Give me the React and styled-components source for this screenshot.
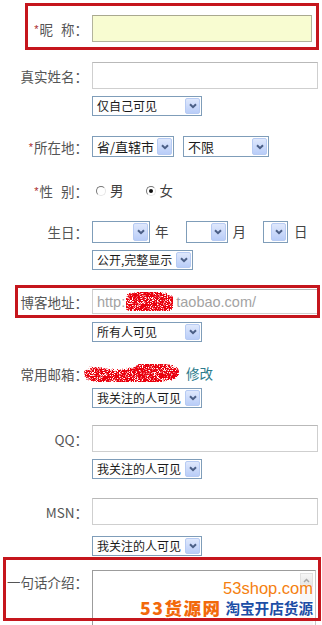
import React from "react";
import styled, { createGlobalStyle } from "styled-components";

const Global = createGlobalStyle`
  html, body { margin: 0; padding: 0; background: #fff; overflow: hidden; }
  body { width: 322px; height: 625px; }
`;

const Page = styled.div`
  position: relative;
  width: 322px;
  height: 625px;
  overflow: hidden;
  font-family: "Noto Sans CJK SC", "Noto Sans", sans-serif;
  font-size: 13.5px;
  color: #555;
`;

const Form = styled.div`
  display: flex;
  flex-direction: column;
`;

const Field = styled.div`
  position: relative;
  display: grid;
  grid-template-columns: 88px 1fr;
  column-gap: 4px;
  align-items: ${(p) => p.$align || "center"};
  height: ${(p) => p.$h}px;
  margin-top: ${(p) => p.$mt}px;
`;

const Label = styled.div`
  text-align: right;
  white-space: nowrap;
  line-height: 16px;
  padding-top: ${(p) => p.$pt || 0}px;
`;

const Req = styled.span`
  font-family: "Liberation Sans", Arial, sans-serif;
  font-size: 11px;
  color: #a8282c;
  vertical-align: 2px;
  margin-right: 1px;
`;

const Gap = styled.span`
  display: inline-block;
  width: ${(p) => p.$w}px;
`;

const Content = styled.div`
  display: flex;
  align-items: center;
  height: 100%;
`;

const TextBox = styled.div`
  box-sizing: border-box;
  width: ${(p) => p.$w}px;
  height: 100%;
  border: 1px solid ${(p) => p.$border || "#cfcfcf"};
  border-top-color: ${(p) => p.$borderTop || "#b9b9b9"};
  background: ${(p) => p.$bg || "#fff"};
  display: flex;
  align-items: center;
  padding-left: 4px;
  font-family: "Liberation Sans", Arial, sans-serif;
  font-size: 14.5px;
  color: #a3a3a3;
  white-space: nowrap;
  overflow: hidden;
`;

const SelectBox = styled.div`
  box-sizing: border-box;
  width: ${(p) => p.$w}px;
  height: ${(p) => p.$h || 20}px;
  flex: none;
  border: 1px solid #7f9db9;
  background: #fff;
  display: flex;
  align-items: center;
  justify-content: space-between;
  padding: 1px 1px 1px 4px;
  font-size: ${(p) => p.$fs || 12}px;
  color: #1a1a1a;
  line-height: 1;
  white-space: nowrap;
`;

const ArrowBtn = styled.span`
  flex: none;
  box-sizing: border-box;
  width: 15px;
  height: 100%;
  border: 1px solid #b7cbf3;
  border-radius: 2px;
  background: linear-gradient(#dfe8fc, #b9cdf8);
  display: flex;
  align-items: center;
  justify-content: center;
`;

const Select = ({ w, h, fs, children }) => (
  <SelectBox $w={w} $h={h} $fs={fs}>
    <span>{children}</span>
    <ArrowBtn>
      <svg width="8" height="6" viewBox="0 0 8 6">
        <path d="M1 1.2 L4 4.2 L7 1.2" fill="none" stroke="#4b5f86" strokeWidth="2" />
      </svg>
    </ArrowBtn>
  </SelectBox>
);

const SubRow = styled.div`
  display: flex;
  margin-top: ${(p) => p.$mt}px;
  padding-left: 92px;
`;

const Pair = styled.div`
  display: flex;
  gap: ${(p) => p.$gap}px;
`;

const Unit = styled.span`
  color: #444;
  margin: 0 ${(p) => p.$mr}px 0 ${(p) => p.$ml}px;
  line-height: 1;
`;

const Options = styled.div`
  display: flex;
  align-items: center;
  padding-left: 4px;
  gap: 22px;
`;

const Option = styled.span`
  display: inline-flex;
  align-items: center;
  gap: 4px;
  color: #3d3d3d;
  line-height: 1;
`;

const Radio = styled.span`
  position: relative;
  width: 10px;
  height: 10px;
  box-sizing: border-box;
  border-radius: 50%;
  border: 1px solid;
  border-color: #777 #e6e6e6 #e6e6e6 #777;
  &::after {
    content: "";
    display: ${(p) => (p.$on ? "block" : "none")};
    position: absolute;
    left: 2px;
    top: 2px;
    width: 4px;
    height: 4px;
    border-radius: 50%;
    background: #111;
  }
`;

const Link = styled.span`
  color: #2b7b8d;
  margin-left: 6px;
  line-height: 1;
`;

const Mark = styled.div`
  position: absolute;
  pointer-events: none;
  box-sizing: border-box;
  border: 3px solid #c5161d;
  top: ${(p) => p.$t}px;
  left: ${(p) => p.$l}px;
  right: ${(p) => p.$r}px;
  height: ${(p) => p.$h}px;
`;

const TextArea = styled.div`
  box-sizing: border-box;
  width: 224px;
  height: 62px;
  border: 1px solid #9c9c9c;
  border-right-color: #c8c8c8;
  background: #fff;
  display: flex;
  justify-content: flex-end;
  padding: 2px;
`;

const ScrollBar = styled.div`
  width: 13px;
  display: flex;
  flex-direction: column;
  background: #f7f7f7;
`;

const ScrollBtn = styled.div`
  box-sizing: border-box;
  height: 14px;
  border: 1px solid #e1e1e1;
  background: linear-gradient(#f6f6f6, #e4e4e4);
  display: flex;
  align-items: center;
  justify-content: center;
`;

const Watermark = styled.div`
  position: absolute;
  right: 9px;
  bottom: 9px;
  display: flex;
  flex-direction: column;
  align-items: flex-end;
  line-height: 1;
  pointer-events: none;
`;

const WmDomain = styled.div`
  font-family: "Liberation Sans", Arial, sans-serif;
  font-size: 16.5px;
  color: #f5800f;
  margin-bottom: 2px;
  text-shadow: 0 0 2px #fff;
`;

const WmLine = styled.div`
  display: flex;
  align-items: flex-end;
  gap: 4px;
`;

const WmBrand = styled.span`
  font-family: "Noto Sans CJK SC", sans-serif;
  font-weight: 900;
  font-size: 17.5px;
  letter-spacing: 1.5px;
  color: #f2690b;
  text-shadow: -1px -1px 0 #fff, 1px -1px 0 #fff, -1px 1px 0 #fff, 1px 1px 0 #fff;
`;

const WmSlogan = styled.span`
  font-family: "Noto Sans CJK SC", sans-serif;
  font-weight: 700;
  font-size: 14.6px;
  color: #1c4ea6;
  text-shadow: -1px -1px 0 #fff, 1px -1px 0 #fff, -1px 1px 0 #fff, 1px 1px 0 #fff;
`;

const ScribbleSvg = styled.svg`
  flex: none;
  display: block;
  margin-left: ${(p) => p.$ml || 0}px;
`;

const Scribble = ({ id, w, h, d, ml, sw }) => (
  <ScribbleSvg $ml={ml} width={w} height={h} viewBox={`0 0 ${w} ${h}`}>
    <defs>
      <filter id={id} x="-10%" y="-20%" width="120%" height="140%">
        <feTurbulence type="fractalNoise" baseFrequency="0.7" numOctaves="2" seed="3" result="n" />
        <feDisplacementMap in="SourceGraphic" in2="n" scale="6" xChannelSelector="R" yChannelSelector="G" result="d" />
        <feTurbulence type="fractalNoise" baseFrequency="1.6" numOctaves="1" seed="9" result="n2" />
        <feColorMatrix in="n2" type="matrix" values="0 0 0 0 0  0 0 0 0 0  0 0 0 0 0  7 0 0 0 -2.4" result="m" />
        <feComposite in="d" in2="m" operator="in" />
      </filter>
    </defs>
    <g filter={`url(#${id})`} fill="none" stroke="#ea0010" strokeLinecap="round" strokeLinejoin="round">
      {d.map((path, i) => (
        <path key={i} d={path} strokeWidth={sw[i]} />
      ))}
    </g>
  </ScribbleSvg>
);

export default function App() {
  return (
    <Page>
      <Global />
      <Form>
        <Field $mt={15} $h={27}>
          <Mark $t={-12} $l={25} $r={3} $h={47} />
          <Label>
            <Req>*</Req>昵<Gap $w={8} />称：
          </Label>
          <TextBox $w={220} $bg="#f8fcd1" $border="#b3b39c" $borderTop="#a9a98f" />
        </Field>

        <Field $mt={20} $h={27}>
          <Label>真实姓名：</Label>
          <TextBox $w={226} />
        </Field>
        <SubRow $mt={7}>
          <Select w={110}>仅自己可见</Select>
        </SubRow>

        <Field $mt={20} $h={21}>
          <Label>
            <Req>*</Req>所在地：
          </Label>
          <Content>
            <Pair $gap={9}>
              <Select w={82} h={21} fs={13}>省/直辖市</Select>
              <Select w={86} h={21} fs={13}>不限</Select>
            </Pair>
          </Content>
        </Field>

        <Field $mt={24} $h={20}>
          <Label>
            <Req>*</Req>性<Gap $w={8} />别：
          </Label>
          <Options>
            <Option>
              <Radio />男
            </Option>
            <Option>
              <Radio $on />女
            </Option>
          </Options>
        </Field>

        <Field $mt={20} $h={22}>
          <Label>生日：</Label>
          <Content>
            <Select w={58} h={22} />
            <Unit $ml={5} $mr={17}>年</Unit>
            <Select w={42} h={22} />
            <Unit $ml={5} $mr={17}>月</Unit>
            <Select w={25} h={22} />
            <Unit $ml={6} $mr={0}>日</Unit>
          </Content>
        </Field>
        <SubRow $mt={7}>
          <Select w={101}>公开,完整显示</Select>
        </SubRow>

        <Field $mt={19} $h={25}>
          <Mark $t={-4} $l={15} $r={2} $h={33} />
          <Label>博客地址：</Label>
          <TextBox $w={226}>
            http:
            <Scribble
              id="s1"
              w={54}
              h={24}
              ml={-3}
              sw={[14, 12, 8]}
              d={[
                "M9 12 C 16 6, 28 6, 36 9 S 46 13, 47 12",
                "M8 15 C 18 19, 34 19, 46 15",
                "M20 6 C 28 4, 38 5, 44 8",
              ]}
            />
            taobao.com/
          </TextBox>
        </Field>
        <SubRow $mt={8}>
          <Select w={110}>所有人可见</Select>
        </SubRow>

        <Field $mt={20} $h={20}>
          <Label>常用邮箱：</Label>
          <Content>
            <Scribble
              id="s2"
              w={96}
              h={24}
              ml={-8}
              sw={[11, 12, 10, 8]}
              d={[
                "M6 12 C 16 8, 26 16, 40 13 S 58 8, 72 10",
                "M36 15 C 52 19, 70 16, 89 11",
                "M56 7 C 66 3, 78 5, 87 9",
                "M8 15 C 18 17, 28 16, 36 14",
              ]}
            />
            <Link>修改</Link>
          </Content>
        </Field>
        <SubRow $mt={6}>
          <Select w={110}>我关注的人可见</Select>
        </SubRow>

        <Field $mt={17} $h={27}>
          <Label>QQ：</Label>
          <TextBox $w={226} />
        </Field>
        <SubRow $mt={7}>
          <Select w={110}>我关注的人可见</Select>
        </SubRow>

        <Field $mt={19} $h={27}>
          <Label>MSN：</Label>
          <TextBox $w={226} />
        </Field>
        <SubRow $mt={11}>
          <Select w={110}>我关注的人可见</Select>
        </SubRow>

        <Field $mt={14} $h={62} $align="start">
          <Mark $t={-13} $l={3} $r={1} $h={64} />
          <Label $pt={4}>一句话介绍：</Label>
          <TextArea>
            <ScrollBar>
              <ScrollBtn>
                <svg width="7" height="5" viewBox="0 0 7 5">
                  <path d="M1 4 L3.5 1.5 L6 4" fill="none" stroke="#a8a8a8" strokeWidth="1.5" />
                </svg>
              </ScrollBtn>
            </ScrollBar>
          </TextArea>
        </Field>
      </Form>

      <Watermark>
        <WmDomain>53shop.com</WmDomain>
        <WmLine>
          <WmBrand>53货源网</WmBrand>
          <WmSlogan>淘宝开店货源</WmSlogan>
        </WmLine>
      </Watermark>
    </Page>
  );
}
